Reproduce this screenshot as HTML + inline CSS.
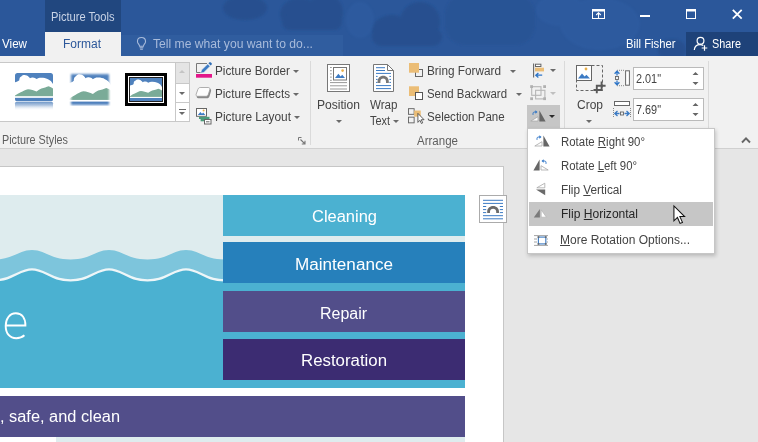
<!DOCTYPE html>
<html>
<head>
<meta charset="utf-8">
<title>Word</title>
<style>
*{margin:0;padding:0;box-sizing:border-box;}
html,body{width:758px;height:442px;overflow:hidden;background:#e6e6e6;}
body{font-family:"Liberation Sans",sans-serif;font-size:12px;color:#444;position:relative;}
.a{position:absolute;}
svg{position:absolute;overflow:visible;}
.t{position:absolute;white-space:nowrap;transform-origin:0 50%;}
u{text-decoration:underline;text-underline-offset:1px;text-decoration-thickness:1px;}
.sep{position:absolute;width:1px;background:#dadada;top:61px;height:84px;}
.arr{position:absolute;width:0;height:0;border-left:3px solid transparent;border-right:3px solid transparent;border-top:3px solid #6a6a6a;}

</style>
</head>
<body>
<svg width="0" height="0" style="position:absolute">
 <defs>
  <symbol id="pic" viewBox="0 0 38 28" preserveAspectRatio="none">
   <rect x="0" y="0" width="38" height="28" fill="#4f81bd"/>
   <path d="M0 9 C1.500 8.800 3 8.500 4.300 7.200 C4.300 5 5 3.800 6.300 3.400 C7.200 2.300 8.300 1.900 9.400 1.900 C11.200 1.900 12.700 2.600 13.600 3.600 C14.300 4 14.700 4.600 14.900 5.200 C15.800 4.500 16.900 4.300 17.900 4.400 C19.300 4.500 20.600 5 21.600 5.900 C23 4.900 24.700 4.500 26.400 4.600 C28.700 4.600 30.800 5 32.500 5.900 C34.500 6.800 36 7.800 36.800 9 L38 10.900 L38 24 L0 24 Z" fill="#fff"/>
   <path d="M0 22.100 C2 20.800 3.800 19.800 5.700 19 C8 17.800 10.500 16.200 13 15.900 C16 16 19 17.200 21.600 18.100 C23.200 17 24.800 15.900 26.400 15.300 C29 14.800 31.500 13.700 33.700 13.100 C35.300 13.500 36.700 14.400 38 15.300 L38 23.200 L0 23.200 Z" fill="#7aab98"/>
   <rect x="0" y="23" width="38" height="1.250" fill="#fff"/>
  </symbol>
  <linearGradient id="refl" x1="0" y1="0" x2="0" y2="1">
   <stop offset="0" stop-color="#4f81bd" stop-opacity="0.850"/>
   <stop offset="0.400" stop-color="#8fadd3" stop-opacity="0.700"/>
   <stop offset="1" stop-color="#ffffff" stop-opacity="0"/>
  </linearGradient>
  <filter id="soft" x="-10%" y="-10%" width="120%" height="120%"><feGaussianBlur stdDeviation="0.7"/></filter>
 </defs>
</svg>

<!-- ================= TITLE BAR ================= -->
<div class="a" style="left:0;top:0;width:758px;height:56px;background:#2b579a;"></div>
<!-- faint clouds in title -->
<svg style="left:0;top:0" width="758" height="56" viewBox="0 0 758 56">
 <defs><filter id="cb" x="-20%" y="-20%" width="140%" height="140%"><feGaussianBlur stdDeviation="1.2"/></filter></defs>
 <g fill="#254d8b" opacity="0.7" filter="url(#cb)">
  <ellipse cx="300" cy="14" rx="20" ry="16"/><ellipse cx="325" cy="12" rx="18" ry="18"/><rect x="282" y="14" width="60" height="16" rx="8"/>
  <ellipse cx="392" cy="30" rx="20" ry="15"/><ellipse cx="420" cy="22" rx="20" ry="20"/><rect x="372" y="28" width="70" height="18" rx="9"/>
  <rect x="445" y="-5" width="90" height="50" rx="20" opacity="0.45"/>
  <ellipse cx="672" cy="50" rx="14" ry="11"/>
  <ellipse cx="245" cy="8" rx="22" ry="12"/>
 </g>
 <g fill="#3362a8" opacity="0.35" filter="url(#cb)">
  <ellipse cx="600" cy="24" rx="40" ry="26"/><ellipse cx="560" cy="10" rx="24" ry="16"/><ellipse cx="360" cy="20" rx="14" ry="18"/>
 </g>
 <rect x="121" y="35" width="222" height="21" fill="#3a66a8" opacity="0.400"/>
</svg>
<div class="a" style="left:45px;top:0;width:76px;height:32px;background:#21477f;"></div>
<div class="a" style="left:45px;top:32px;width:76px;height:24px;background:#f1f1f1;"></div>
<div class="a" style="left:686px;top:32px;width:72px;height:24px;background:#1e4279;"></div>
<!-- lightbulb -->
<svg style="left:136.300px;top:35.500px" width="11" height="15" viewBox="0 0 12 16">
 <path d="M6 1.5 C3.2 1.5 1.6 3.5 1.6 5.7 C1.6 7.4 2.6 8.3 3.3 9.3 C3.7 9.9 3.9 10.4 3.9 11 L8.1 11 C8.1 10.4 8.3 9.9 8.7 9.3 C9.4 8.3 10.4 7.4 10.4 5.7 C10.4 3.5 8.8 1.5 6 1.5 Z" fill="none" stroke="#a8bbdb" stroke-width="1.2"/>
 <path d="M4 12.6 H8 M4.5 14.3 H7.5" stroke="#a8bbdb" stroke-width="1.1" fill="none"/>
</svg>
<!-- window controls -->
<svg style="left:592px;top:7.500px" width="14" height="12" viewBox="0 0 14 12">
 <rect x="0.5" y="1.5" width="12" height="9" fill="none" stroke="#fff" stroke-width="1"/>
 <rect x="0.5" y="1.5" width="12" height="2" fill="#fff"/>
 <path d="M6.5 10 V5.2 M4.2 7 L6.5 4.7 L8.8 7" stroke="#fff" stroke-width="1.1" fill="none"/>
</svg>
<div class="a" style="left:640px;top:15px;width:10px;height:2px;background:#fff;"></div>
<svg style="left:686px;top:9px" width="11" height="11" viewBox="0 0 11 11">
 <rect x="0.5" y="0.5" width="9" height="9" fill="none" stroke="#fff" stroke-width="1"/>
 <rect x="0" y="0" width="10" height="2.5" fill="#fff"/>
</svg>
<svg style="left:732px;top:9px" width="11" height="11" viewBox="0 0 11 11">
 <path d="M0.8 0.8 L9.7 9.7 M9.7 0.8 L0.8 9.7" stroke="#fff" stroke-width="1.8" fill="none"/>
</svg>
<!-- share person icon -->
<svg style="left:693px;top:36px" width="16" height="16" viewBox="0 0 16 16">
 <circle cx="7.5" cy="4.8" r="3.4" fill="none" stroke="#fff" stroke-width="1.2"/>
 <path d="M1.3 14 C1.6 10.5 4 8.6 7 8.6 C8.6 8.6 9.6 9 10.3 9.5" fill="none" stroke="#fff" stroke-width="1.2"/>
 <path d="M11.5 9.2 V14.8 M8.7 12 H14.3" stroke="#fff" stroke-width="1.2"/>
</svg>

<!-- ================= RIBBON ================= -->
<div class="a" style="left:0;top:56px;width:758px;height:93px;background:#f1f1f1;border-bottom:1px solid #d0d0d0;"></div>

<!-- gallery -->
<div class="a" style="left:-1px;top:62px;width:191px;height:60px;background:#fff;border:1px solid #c8c8c8;"></div>
<div class="a" style="left:175px;top:62px;width:15px;height:60px;border:1px solid #c8c8c8;background:#fff;"></div>
<div class="a" style="left:176px;top:63px;width:13px;height:20px;background:#e4e4e4;"></div>
<div class="a" style="left:175px;top:83px;width:15px;height:1px;background:#c8c8c8;"></div>
<div class="a" style="left:175px;top:102px;width:15px;height:1px;background:#c8c8c8;"></div>
<div class="a" style="left:179px;top:70px;width:0;height:0;border-left:3px solid transparent;border-right:3px solid transparent;border-bottom:3px solid #c4c4c4;"></div>
<div class="arr" style="left:179px;top:92px;"></div>
<div class="a" style="left:179px;top:109px;width:7px;height:1px;background:#6a6a6a;"></div>
<div class="arr" style="left:179px;top:112px;"></div>

<!-- thumb 1 : rounded + reflection -->
<svg style="left:15px;top:73px" width="38" height="38" viewBox="0 0 38 38">
 <clipPath id="c1"><rect x="0" y="0" width="38" height="28.5" rx="2.5"/></clipPath>
 <g clip-path="url(#c1)"><use href="#pic" x="0" y="0" width="38" height="28.5"/></g>
 <rect x="0" y="28.700" width="38" height="9" rx="1.500" fill="url(#refl)"/>
</svg>
<!-- thumb 2 : soft edge -->
<svg style="left:69px;top:72px" width="42" height="34" viewBox="0 0 42 33" preserveAspectRatio="none">
 <defs><filter id="mb" x="-20%" y="-20%" width="140%" height="140%"><feGaussianBlur stdDeviation="0.900"/></filter>
 <mask id="m2"><rect x="2" y="2" width="38" height="30" fill="#fff" filter="url(#mb)"/></mask></defs>
 <g mask="url(#m2)"><use href="#pic" x="0" y="0" width="42" height="33"/></g>
</svg>
<!-- thumb 3 : double frame -->
<div class="a" style="left:125px;top:73px;width:42px;height:33px;background:#fff;border:3px solid #000;"></div>
<div class="a" style="left:129px;top:77px;width:34px;height:25px;border:1px solid #222;"></div>
<svg style="left:130px;top:78px" width="32" height="23" viewBox="0 0 32 23"><use href="#pic" x="0" y="0" width="32" height="23"/></svg>

<!-- dialog launcher -->
<svg style="left:298px;top:137px" width="8" height="8" viewBox="0 0 8 8">
 <path d="M0.5 3.5 V0.5 H3.5" fill="none" stroke="#777" stroke-width="1"/>
 <path d="M2.5 2.5 L7 7 M7 3.8 V7 H3.8" fill="none" stroke="#777" stroke-width="1.1"/>
</svg>
<div class="sep" style="left:310px;"></div>
<div class="sep" style="left:564px;"></div>
<div class="sep" style="left:708px;"></div>

<!-- Picture Border icon -->
<svg style="left:195px;top:62px" width="18" height="17" viewBox="0 0 18 17">
 <path d="M12 1.500 H1.500 V10.500 H7" fill="none" stroke="#777" stroke-width="1"/>
 <path d="M5.600 11.200 L6.500 8 L12.700 1.900 L15.100 4.300 L8.900 10.400 Z" fill="#3c7bc4" stroke="#f1f1f1" stroke-width="0.600"/>
 <path d="M13.400 1.300 L14.200 0.500 C14.700 0 15.400 0 15.900 0.500 L16.500 1.100 C17 1.600 17 2.300 16.500 2.800 L15.700 3.600 Z" fill="#2f6db5"/>
 <rect x="1" y="12" width="16" height="3.700" fill="#e3178a"/>
</svg>
<!-- Picture Effects icon -->
<svg style="left:195px;top:86px" width="17" height="15" viewBox="0 0 17 15">
 <path d="M6 2.800 H14.200 C15.900 2.800 16.400 3.900 16 5.200 L14.600 10 C14.200 11.400 13.200 12.300 11.800 12.300 H3.400 C1.900 12.300 1.500 11.200 2 9.800 L3.600 5 C4 3.700 4.800 2.800 6 2.800 Z" fill="#8a8a8a"/>
 <path d="M5.200 1.500 H13.200 C14.700 1.500 15.200 2.500 14.800 3.700 L13.400 8.200 C13 9.500 12 10.300 10.800 10.300 H2.600 C1.200 10.300 0.800 9.300 1.200 8.100 L2.800 3.600 C3.200 2.400 4 1.500 5.200 1.500 Z" fill="#fdfdfd" stroke="#9a9a9a" stroke-width="0.800"/>
</svg>
<!-- Picture Layout icon -->
<svg style="left:196px;top:108px" width="16" height="17" viewBox="0 0 16 17">
 <rect x="0.500" y="0.500" width="10" height="7.800" fill="#fff" stroke="#666" stroke-width="1"/>
 <path d="M1.800 7 L4.400 3.900 L6 5.700 L7.200 4.500 L9.300 7 Z" fill="#3c7bc4"/>
 <circle cx="7.600" cy="2.600" r="1" fill="#eab04a"/>
 <rect x="3" y="8.800" width="10.500" height="2.200" fill="#4b9b7a"/>
 <rect x="4.600" y="11" width="4.500" height="2.300" fill="#4b9b7a"/>
 <rect x="8.500" y="11.500" width="6.500" height="4.500" fill="#fff" stroke="#666" stroke-width="1"/>
 <path d="M10 13.800 H13.500" stroke="#666" stroke-width="1"/>
</svg>
<div class="arr" style="left:293px;top:70px;"></div>
<div class="arr" style="left:293px;top:93px;"></div>
<div class="arr" style="left:294px;top:116px;"></div>

<!-- Position icon -->
<svg style="left:327px;top:64px" width="24" height="29" viewBox="0 0 24 29">
 <rect x="0.500" y="0.500" width="22" height="27" fill="#fff" stroke="#777" stroke-width="1"/>
 <rect x="6.500" y="3.500" width="13" height="12.500" fill="#fff" stroke="#777" stroke-width="1"/>
 <path d="M8 14 L11.400 9.800 L13.600 12.400 L15.200 10.800 L18 14 Z" fill="#3c7bc4"/>
 <circle cx="15.600" cy="6.600" r="1.300" fill="#eab04a"/>
 <path d="M3 3.500 H4.800 M3 6.700 H4.800 M3 9.900 H4.800 M3 13.100 H4.800 M3 16.300 H4.800 M3 18.600 H20 M3 21.800 H20 M3 25 H20" stroke="#999" stroke-width="1"/>
</svg>
<div class="arr" style="left:335.700px;top:120px;"></div>
<!-- Wrap Text icon -->
<svg style="left:373px;top:64px" width="22" height="29" viewBox="0 0 22 29">
 <path d="M0.500 0.500 H14.500 L20.500 6.500 V27.500 H0.500 Z" fill="#fff" stroke="#777" stroke-width="1"/>
 <path d="M14.500 0.500 V6.500 H20.500" fill="none" stroke="#777" stroke-width="1"/>
 <path d="M3 3.700 H12 M3 6.500 H12 M3 9.400 H18 M3 12.400 H4.600 M16.400 12.400 H18 M3 15.400 H4.600 M16.400 15.400 H18 M3 18.400 H4.600 M16.400 18.400 H18 M3 21.600 H18 M3 24.600 H18" stroke="#3c7bc4" stroke-width="1"/>
 <path d="M4.600 19 V17.400 C4.600 14 7 11.700 10.200 11.700 C13.400 11.700 15.800 14 15.800 17.400 V19 H13 V17.600 C13 15.600 11.800 14.400 10.200 14.400 C8.600 14.400 7.400 15.600 7.400 17.600 V19 Z" fill="#777"/>
</svg>
<div class="arr" style="left:393px;top:120px;"></div>

<!-- Bring Forward icon -->
<svg style="left:408px;top:62px" width="18" height="18" viewBox="0 0 18 18">
 <rect x="7.500" y="7.500" width="7" height="7" fill="#f1f1f1" stroke="#666" stroke-width="1"/>
 <rect x="1" y="1" width="10" height="9.700" fill="#ebbd76"/>
</svg>
<!-- Send Backward icon -->
<svg style="left:408px;top:85px" width="18" height="18" viewBox="0 0 18 18">
 <rect x="1" y="1.300" width="10" height="9.700" fill="#ebbd76"/>
 <rect x="7.500" y="7.500" width="7" height="7" fill="#fff" stroke="#555" stroke-width="1"/>
</svg>
<!-- Selection Pane icon -->
<svg style="left:408px;top:107px" width="17" height="17.500" viewBox="0 0 18 18">
 <rect x="0.5" y="1.5" width="6" height="6" fill="#f1f1f1" stroke="#666" stroke-width="1"/>
 <rect x="0.5" y="10.5" width="6" height="6" fill="#f1f1f1" stroke="#666" stroke-width="1"/>
 <rect x="6.500" y="3.500" width="7" height="6.500" fill="#ebbd76"/>
 <path d="M10.5 6.5 V16 L12.6 13.8 L14.2 17.2 L15.6 16.5 L14 13.2 H17 Z" fill="#fff" stroke="#444" stroke-width="0.9"/>
</svg>
<div class="arr" style="left:510px;top:70px;"></div>
<div class="arr" style="left:516px;top:93px;"></div>

<!-- Align icon -->
<svg style="left:532px;top:62.500px" width="14" height="16" viewBox="0 0 14 16">
 <path d="M1.600 0.500 V14.600" stroke="#666" stroke-width="1.100"/>
 <rect x="3.500" y="1.200" width="5.400" height="2.300" fill="#fff" stroke="#666" stroke-width="1"/>
 <rect x="3" y="4.700" width="9" height="3.700" fill="#ebbd76"/>
 <path d="M10.200 12.200 H4 M6.400 9.900 L3.800 12.200 L6.400 14.500" fill="none" stroke="#2e75c7" stroke-width="1.300"/>
</svg>
<div class="arr" style="left:549.700px;top:69px;"></div>
<!-- Group icon (disabled) -->
<svg style="left:530px;top:85px" width="17" height="16" viewBox="0 0 17 16">
 <g fill="none" stroke="#b6b6b6" stroke-width="1.100">
  <rect x="1.700" y="1.700" width="9.300" height="8.600"/>
  <rect x="5.600" y="5.300" width="9.300" height="8.600"/>
 </g>
 <g fill="#b0b0b0"><rect x="0.200" y="0.200" width="2.800" height="2.800"/><rect x="13.200" y="0.200" width="2.800" height="2.800"/><rect x="0.200" y="12.300" width="2.800" height="2.800"/><rect x="13.200" y="12.300" width="2.800" height="2.800"/></g>
</svg>
<div class="arr" style="left:549.700px;top:92.300px;border-top-color:#c0c0c0;"></div>
<!-- Rotate button (pressed) -->
<div class="a" style="left:527px;top:105px;width:33px;height:23px;background:#c6c6c6;"></div>
<svg style="left:529.800px;top:109.500px" width="16" height="12" viewBox="0 0 16 12">
 <path d="M0.800 11 H8 V6.700 Z" fill="#fafafa" stroke="#a8a8a8" stroke-width="0.800"/>
 <path d="M9.400 0.400 V11.400 H15.600 Z" fill="#666"/>
 <path d="M3 4.800 V3.600 C3 2.500 3.600 2 4.700 2 H6" fill="none" stroke="#2e75c7" stroke-width="1"/>
 <path d="M5.400 0.200 L7.500 2 L5.400 3.800 Z" fill="#2e75c7"/>
</svg>
<div class="arr" style="left:549px;top:115px;border-top-color:#2a2a2a;"></div>

<!-- Crop icon -->
<svg style="left:576px;top:64px" width="30" height="30" viewBox="0 0 30 30">
 <rect x="0.500" y="1.500" width="26" height="25" fill="none" stroke="#666" stroke-width="1" stroke-dasharray="3 2"/>
 <rect x="0.500" y="1.500" width="15" height="15" fill="#fff" stroke="#666" stroke-width="1"/>
 <path d="M2 14.500 L6 9.600 L8.600 12.600 L10.400 10.800 L14 14.500 Z" fill="#3c7bc4"/>
 <circle cx="10" cy="5" r="1.400" fill="#eab04a"/>
 <path d="M20.800 20.900 V29.200 M19.900 21.800 H29.600 M25.600 17.500 V26.900 M17.500 26 H26.500" fill="none" stroke="#595959" stroke-width="1.900"/>
</svg>
<div class="arr" style="left:586px;top:120px;"></div>
<!-- Height icon -->
<svg style="left:613px;top:69px" width="18" height="18" viewBox="0 0 18 18">
 <rect x="12.600" y="1.800" width="3.800" height="14.400" fill="#fff" stroke="#666" stroke-width="1"/>
 <path d="M4 1.300 H12 M4 16.700 H12" stroke="#888" stroke-width="1" stroke-dasharray="1 1"/>
 <path d="M4 2.400 V6.400 M1.600 4.700 L4 2.200 L6.400 4.700 M4 15.600 V11.600 M1.600 13.300 L4 15.800 L6.400 13.300" fill="none" stroke="#2e75c7" stroke-width="1.300"/>
 <rect x="2.500" y="7.500" width="3" height="3" fill="#f1f1f1" stroke="#666" stroke-width="0.900"/>
</svg>
<!-- Width icon -->
<svg style="left:613px;top:100px" width="18" height="18" viewBox="0 0 18 18">
 <rect x="1.5" y="1.5" width="15" height="4" fill="#fff" stroke="#666" stroke-width="1"/>
 <path d="M0.5 8 V17 M17.5 8 V17" stroke="#888" stroke-width="1" stroke-dasharray="1 1"/>
 <path d="M2 13.5 H6.5 M4.5 11 L1.8 13.5 L4.5 16 M16 13.5 H11.5 M13.5 11 L16.2 13.5 L13.5 16" fill="none" stroke="#3c7bc4" stroke-width="1.3"/>
 <rect x="7.5" y="12" width="3" height="3" fill="#f1f1f1" stroke="#666" stroke-width="0.9"/>
</svg>
<!-- size inputs -->
<div class="a" style="left:633px;top:67px;width:71px;height:23px;background:#fff;border:1px solid #bababa;"></div>
<div class="a" style="left:633px;top:98px;width:71px;height:23px;background:#fff;border:1px solid #bababa;"></div>
<svg style="left:692.300px;top:71px" width="7" height="46" viewBox="0 0 7 46">
 <path d="M0.5 4 L3.5 1 L6.5 4 Z M0.5 11 L3.5 14 L6.5 11 Z M0.5 35 L3.5 32 L6.5 35 Z M0.5 42 L3.5 45 L6.5 42 Z" fill="#666"/>
</svg>
<!-- collapse chevron -->
<svg style="left:740.500px;top:136px" width="10" height="8" viewBox="0 0 10 8"><path d="M1 6.500 L5 2.300 L9 6.500" fill="none" stroke="#666" stroke-width="1.900"/></svg>

<!-- ================= DOCUMENT ================= -->
<div class="a" style="left:-1px;top:166px;width:505px;height:290px;background:#fff;border:1px solid #c6c6c6;"></div>
<!-- picture -->
<div class="a" style="left:0;top:195px;width:465px;height:193px;background:#4bb1d1;overflow:hidden;">
 <div class="a" style="left:0;top:0;width:465px;height:47px;background:#deecee;"></div>
 <svg style="left:0;top:0" width="223" height="193" viewBox="0 195 223 193">
  <rect x="0" y="195" width="223" height="75" fill="#deecee"/>
  <g transform="translate(38.5 0)">
  <path d="M-45 259.5 C-25 259.5 -20 250 -6.5 250 C7 250 12 259.5 32 259.5 C52 259.5 57 250 70.5 250 C84 250 89 259.5 109 259.5 C129 259.5 134 250 147.5 250 C161 250 166 259.5 186 259.5 C206 259.5 211 250 224.5 250 L224.5 300 L-45 300 Z" fill="#7dc5dc"/>
  <path d="M-45 281 C-25 281 -20 270 -6.5 270 C7 270 12 281 32 281 C52 281 57 270 70.5 270 C84 270 89 281 109 281 C129 281 134 270 147.5 270 C161 270 166 281 186 281 C206 281 211 270 224.5 270 L224.5 300 L-45 300 Z" fill="#4bb1d1"/>
  <path d="M-45 281 C-25 281 -20 270 -6.5 270 C7 270 12 281 32 281 C52 281 57 270 70.5 270 C84 270 89 281 109 281 C129 281 134 270 147.5 270 C161 270 166 281 186 281 C206 281 211 270 224.5 270" fill="none" stroke="#eef6f8" stroke-width="2.200" transform="translate(0 -0.600)"/>
  </g>
 </svg>
 <div class="a" style="left:223px;top:0;width:242px;height:41px;background:#4bb1d1;"></div>
 <div class="a" style="left:223px;top:47px;width:242px;height:41px;background:#2680bb;"></div>
 <div class="a" style="left:223px;top:96px;width:242px;height:41px;background:#524e8a;"></div>
 <div class="a" style="left:223px;top:144px;width:242px;height:41px;background:#3c2c72;"></div>
</div>
<svg style="left:0;top:300px" width="40" height="50" viewBox="0 300 40 50"><path d="M5.700 325.500 H25.400 C25.400 318 22 313.300 15.800 313.300 C9.500 313.300 5.700 319 5.700 326 C5.700 333.500 9.800 338.200 16.300 338.200 C19.600 338.200 22.300 337.200 24.400 335.300" fill="none" stroke="#fff" stroke-width="1.900"/></svg>
<!-- bottom banner -->
<div class="a" style="left:0;top:396px;width:465px;height:41px;background:#524e8a;"></div>
<div class="a" style="left:56px;top:437px;width:409px;height:5px;background:#deecee;"></div>
<!-- layout options button -->
<div class="a" style="left:479px;top:195px;width:28px;height:28px;background:#fff;border:1px solid #ababab;"></div>
<svg style="left:483px;top:199px" width="20" height="21" viewBox="0 0 20 21">
 <path d="M0 1.300 H20 M0 4.400 H20 M0 7.500 H3.200 M16.800 7.500 H20 M0 10.600 H3.200 M16.800 10.600 H20 M0 13.600 H3.200 M16.800 13.600 H20 M0 16.700 H20 M0 19.800 H20" stroke="#3c7bc4" stroke-width="1"/>
 <path d="M4.200 14 V12.600 C4.200 9.300 6.800 7 10.100 7 C13.400 7 16 9.300 16 12.600 V14 H13.200 V12.800 C13.200 10.900 11.900 9.700 10.100 9.700 C8.300 9.700 7 10.900 7 12.800 V14 Z" fill="#6a6a6a"/>
</svg>

<!-- ================= DROPDOWN MENU ================= -->
<div class="a" style="left:527px;top:128px;width:188px;height:126px;background:#fff;border:1px solid #c6c6c6;box-shadow:1px 2px 4px rgba(0,0,0,0.2);"></div>
<div class="a" style="left:529px;top:202px;width:184px;height:24px;background:#c6c6c6;"></div>
<!-- menu icons -->
<svg style="left:533.500px;top:135.200px" width="16" height="12" viewBox="0 0 16 12">
 <path d="M0.800 11 H8 V6.700 Z" fill="#fff" stroke="#a8a8a8" stroke-width="0.800"/>
 <path d="M9.400 0.400 V11.400 H15.600 Z" fill="#666"/>
 <path d="M3 4.800 V3.600 C3 2.500 3.600 2 4.700 2 H6" fill="none" stroke="#2e75c7" stroke-width="1"/>
 <path d="M5.400 0.200 L7.500 2 L5.400 3.800 Z" fill="#2e75c7"/>
</svg>
<svg style="left:533.200px;top:159.300px" width="16" height="12" viewBox="0 0 16 12">
 <path d="M15.200 11 H8 V6.700 Z" fill="#fff" stroke="#a8a8a8" stroke-width="0.800"/>
 <path d="M6.600 0.400 V11.400 H0.400 Z" fill="#666"/>
 <path d="M13 4.800 V3.600 C13 2.500 12.400 2 11.300 2 H10" fill="none" stroke="#2e75c7" stroke-width="1"/>
 <path d="M10.600 0.200 L8.500 2 L10.600 3.800 Z" fill="#2e75c7"/>
</svg>
<svg style="left:535px;top:182px" width="11" height="14" viewBox="0 0 11 14">
 <path d="M1.800 5.800 H9.800 V1.200 Z" fill="#fff" stroke="#a8a8a8" stroke-width="0.800"/>
 <path d="M1 7.600 H10.200 V13.300 Z" fill="#6a6a6a"/>
</svg>
<svg style="left:533px;top:208px" width="15" height="10" viewBox="0 0 15 10">
 <path d="M0.800 9.500 H6.900 V1 Z" fill="#7a7a7a"/>
 <path d="M8.200 9.200 H13.400 L8.200 1.900 Z" fill="#fff" stroke="#b4b4b4" stroke-width="0.700"/>
</svg>
<svg style="left:534px;top:235px" width="14" height="11" viewBox="0 0 14 11">
 <path d="M0 0.600 H14 M0 10.400 H14 M0 4 H3 M0 7 H3 M12.600 4 H14 M12.600 7 H14" stroke="#9a9a9a" stroke-width="0.900"/>
 <rect x="4.400" y="2.100" width="7.400" height="6.800" fill="#fff" stroke="#3c7bc4" stroke-width="1.100"/>
 <g fill="#666"><rect x="3.600" y="1.200" width="1.700" height="1.700"/><rect x="10.900" y="1.200" width="1.700" height="1.700"/><rect x="3.600" y="8.100" width="1.700" height="1.700"/><rect x="10.900" y="8.100" width="1.700" height="1.700"/></g>
</svg>
<!-- mouse cursor -->
<svg style="left:672.600px;top:204.500px" width="13" height="19.500" viewBox="0 0 14 21">
 <path d="M1 1 V17 L4.800 13.400 L7.600 19.800 L10.200 18.700 L7.400 12.500 H12.500 Z" fill="#fff" stroke="#111" stroke-width="1.1" stroke-linejoin="miter"/>
</svg>

<div class="t" style="left:51px;top:9px;height:16px;line-height:16px;font-size:12px;color:#c9d4e7;transform:scaleX(0.9272);">Picture Tools</div>
<div class="t" style="left:63px;top:36px;height:16px;line-height:16px;font-size:12px;color:#2b579a;transform:scaleX(0.9996);">Format</div>
<div class="t" style="left:2px;top:36px;height:16px;line-height:16px;font-size:12px;color:#fff;transform:scaleX(0.9691);">View</div>
<div class="t" style="left:153px;top:36px;height:16px;line-height:16px;font-size:12px;color:#a8bbdb;transform:scaleX(1.0121);">Tell me what you want to do...</div>
<div class="t" style="left:626px;top:36px;height:16px;line-height:16px;font-size:12px;color:#fff;transform:scaleX(0.9395);">Bill Fisher</div>
<div class="t" style="left:712px;top:36px;height:16px;line-height:16px;font-size:12px;color:#fff;transform:scaleX(0.9054);">Share</div>
<div class="t" style="left:215px;top:63px;height:16px;line-height:16px;font-size:12px;color:#444;transform:scaleX(0.9778);">Picture Border</div>
<div class="t" style="left:215px;top:86px;height:16px;line-height:16px;font-size:12px;color:#444;transform:scaleX(0.9721);">Picture Effects</div>
<div class="t" style="left:215px;top:109px;height:16px;line-height:16px;font-size:12px;color:#444;transform:scaleX(0.9906);">Picture Layout</div>
<div class="t" style="left:317px;top:97px;height:16px;line-height:16px;font-size:12px;color:#444;transform:scaleX(1.0070);">Position</div>
<div class="t" style="left:370px;top:97px;height:16px;line-height:16px;font-size:12px;color:#444;transform:scaleX(0.9665);">Wrap</div>
<div class="t" style="left:370px;top:113px;height:16px;line-height:16px;font-size:12px;color:#444;transform:scaleX(0.9084);">Text</div>
<div class="t" style="left:427px;top:63px;height:16px;line-height:16px;font-size:12px;color:#444;transform:scaleX(0.9820);">Bring Forward</div>
<div class="t" style="left:427px;top:86px;height:16px;line-height:16px;font-size:12px;color:#444;transform:scaleX(0.9518);">Send Backward</div>
<div class="t" style="left:427px;top:109px;height:16px;line-height:16px;font-size:12px;color:#444;transform:scaleX(0.9624);">Selection Pane</div>
<div class="t" style="left:1.5px;top:132px;height:16px;line-height:16px;font-size:12px;color:#5e5e5e;transform:scaleX(0.8997);">Picture Styles</div>
<div class="t" style="left:417px;top:132.5px;height:16px;line-height:16px;font-size:12px;color:#5e5e5e;transform:scaleX(0.9601);">Arrange</div>
<div class="t" style="left:577px;top:97px;height:16px;line-height:16px;font-size:12px;color:#444;transform:scaleX(0.9994);">Crop</div>
<div class="t" style="left:636px;top:71px;height:16px;line-height:16px;font-size:12px;color:#444;transform:scaleX(0.9050);">2.01"</div>
<div class="t" style="left:636px;top:102px;height:16px;line-height:16px;font-size:12px;color:#444;transform:scaleX(0.9050);">7.69"</div>
<div class="t" style="left:561px;top:134px;height:16px;line-height:16px;font-size:12px;color:#444;transform:scaleX(0.9525);">Rotate <u>R</u>ight 90°</div>
<div class="t" style="left:561px;top:158px;height:16px;line-height:16px;font-size:12px;color:#444;transform:scaleX(0.9478);">Rotate <u>L</u>eft 90°</div>
<div class="t" style="left:561px;top:182px;height:16px;line-height:16px;font-size:12px;color:#444;transform:scaleX(0.9834);">Flip <u>V</u>ertical</div>
<div class="t" style="left:561px;top:206px;height:16px;line-height:16px;font-size:12px;color:#262626;transform:scaleX(1.0039);">Flip <u>H</u>orizontal</div>
<div class="t" style="left:560px;top:232px;height:16px;line-height:16px;font-size:12px;color:#444;transform:scaleX(0.9995);"><u>M</u>ore Rotation Options...</div>
<div class="t" style="left:312px;top:205.5px;height:21px;line-height:21px;font-size:16px;color:#fff;transform:scaleX(1.0292);">Cleaning</div>
<div class="t" style="left:295px;top:253.5px;height:21px;line-height:21px;font-size:16px;color:#fff;transform:scaleX(1.0696);">Maintenance</div>
<div class="t" style="left:320px;top:302.5px;height:21px;line-height:21px;font-size:16px;color:#fff;transform:scaleX(0.9970);">Repair</div>
<div class="t" style="left:301px;top:349.5px;height:21px;line-height:21px;font-size:16px;color:#fff;transform:scaleX(1.0510);">Restoration</div>
<div class="t" style="left:0px;top:405.5px;height:21px;line-height:21px;font-size:16px;color:#fff;transform:scaleX(1.0220);">, safe, and clean</div>

</body>
</html>
